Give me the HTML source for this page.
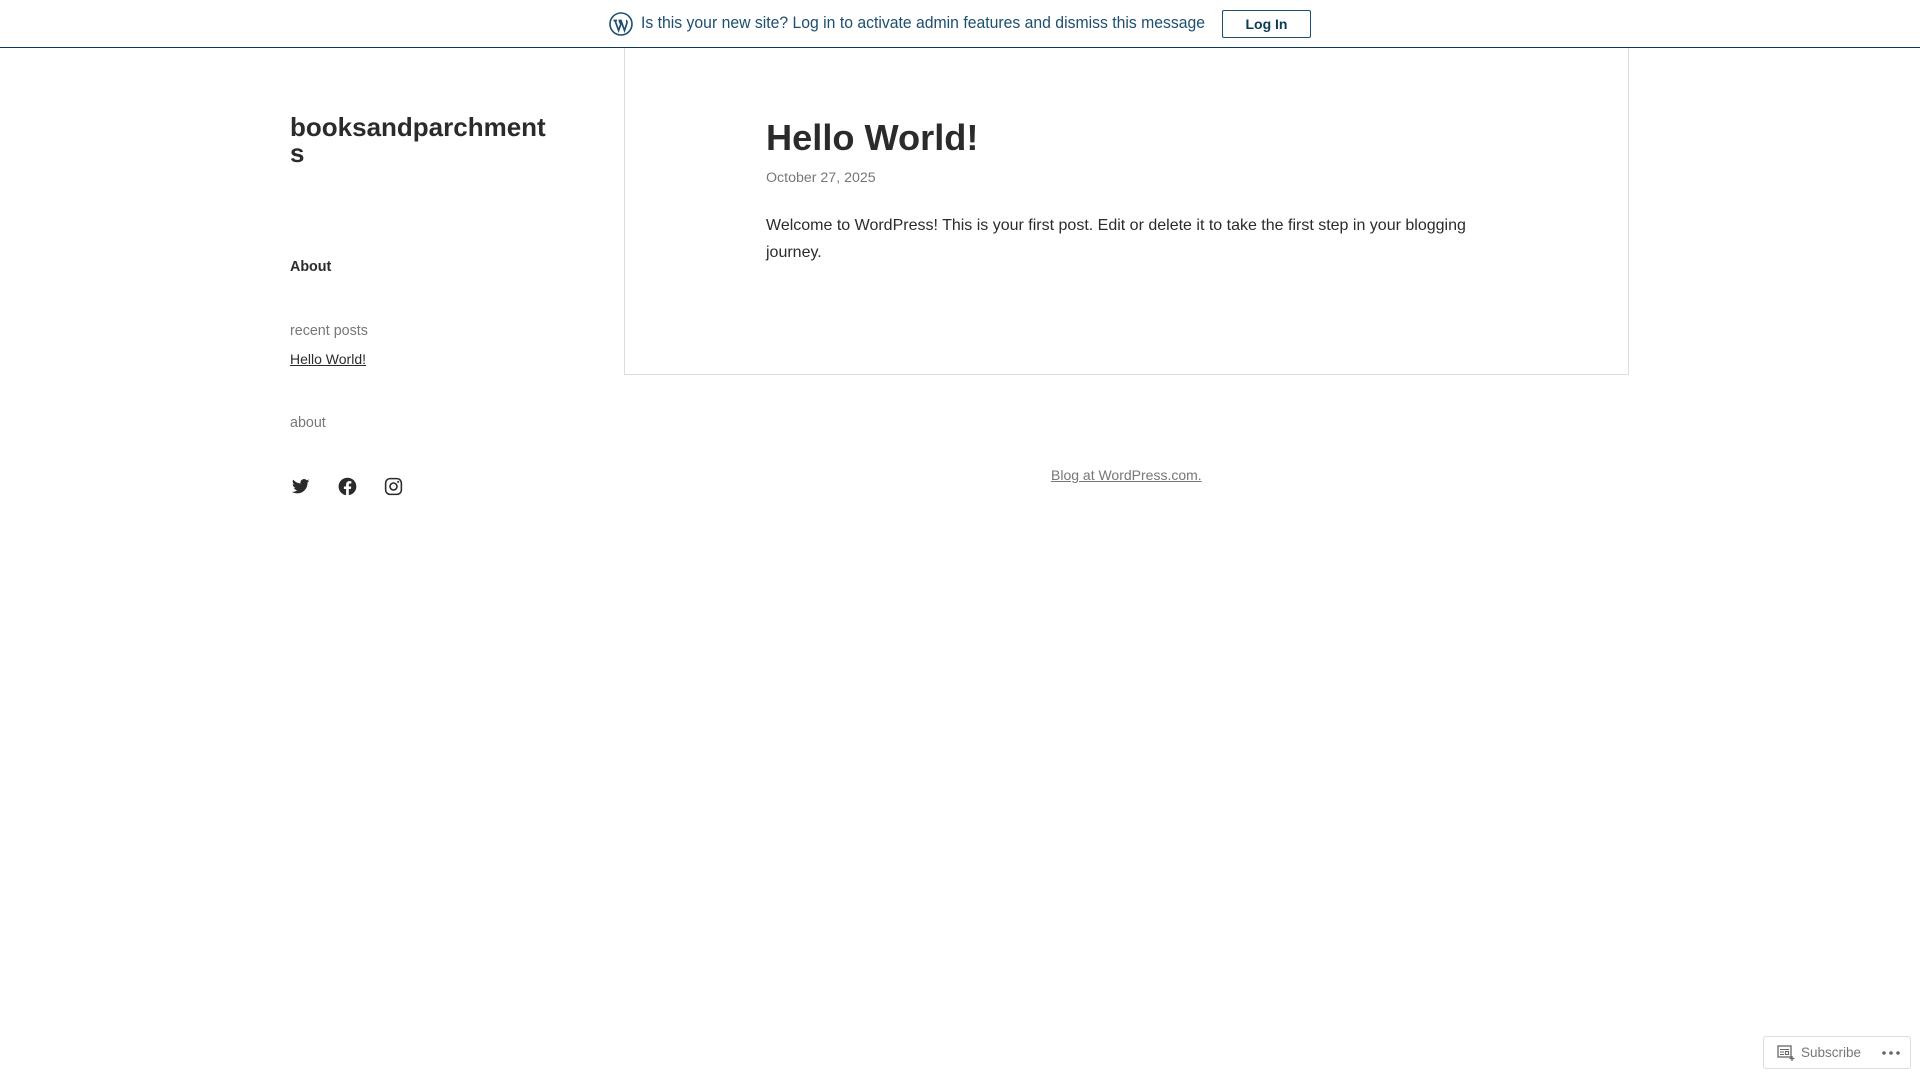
<!DOCTYPE html>
<html><head><meta charset="utf-8"><style>
*{margin:0;padding:0;box-sizing:border-box}
body{width:1920px;height:1080px;background:#fff;font-family:"Liberation Sans",sans-serif;color:#2b2b2b;position:relative;overflow:hidden}
.bar{position:absolute;left:0;top:0;width:1920px;height:48px;border-bottom:1px solid #0f3a55;}
.bar .msg{position:absolute;left:641px;top:14px;font-size:16.5px;color:#1d4f6e;transform:scaleX(0.955);transform-origin:left top;white-space:nowrap}
.bar .btn{position:absolute;left:1222px;top:10px;width:89px;height:28px;border:1px solid #1d4f6e;border-radius:2px;font-size:14px;font-weight:bold;color:#0f3a55;text-align:center;line-height:26px}
.abs{position:absolute;white-space:nowrap}
.card{position:absolute;left:624px;top:48px;width:1005px;height:327px;border:1px solid #ddd;border-top:none}
</style></head><body>
<div class="bar">
<svg style="position:absolute;left:609px;top:12px" width="24" height="24" viewBox="0 0 24 24"><circle cx="12" cy="12" r="11" fill="none" stroke="#1d4f6e" stroke-width="1.6"/><path d="M4.5 8.5h3.5M6 8.5l3.6 10 2.2-6.2-1.5-3.8M9.5 8.5h3.2M12 8.5l3.5 10 2.3-7c.6-2-.2-3-.8-3" fill="none" stroke="#1d4f6e" stroke-width="1.7"/></svg>
<div class="msg">Is this your new site? Log in to activate admin features and dismiss this message</div>
<div class="btn">Log In</div>
</div>
<div class="abs" style="left:290px;top:114px;font-size:26px;font-weight:bold;line-height:26px">booksandparchment<br>s</div>
<div class="abs" style="left:290px;top:259px;font-size:14.3px;font-weight:bold">About</div>
<div class="abs" style="left:290px;top:323px;font-size:14.3px;color:#777">recent posts</div>
<div class="abs" style="left:290px;top:351px;font-size:14px;text-decoration:underline">Hello World!</div>
<div class="abs" style="left:290px;top:415px;font-size:14.3px;color:#777">about</div>
<svg class="abs" style="left:290px;top:476px" width="21" height="21" viewBox="0 0 24 24"><path fill="#2b2b2b" d="M22.2 5.4c-.8.3-1.6.6-2.4.7.9-.5 1.5-1.4 1.8-2.3-.8.5-1.7.8-2.6 1A4.1 4.1 0 0 0 12 8.5 11.6 11.6 0 0 1 3.6 4.2a4.1 4.1 0 0 0 1.3 5.5c-.7 0-1.3-.2-1.9-.5 0 2 1.4 3.7 3.3 4.1-.6.2-1.2.2-1.8.1.5 1.6 2 2.8 3.8 2.9A8.2 8.2 0 0 1 2 18c1.8 1.2 4 1.8 6.3 1.8 7.5 0 11.7-6.3 11.7-11.7v-.5c.8-.6 1.5-1.3 2.2-2.2z"/></svg>
<svg class="abs" style="left:337px;top:476px" width="21" height="21" viewBox="0 0 24 24"><path fill="#2b2b2b" d="M12 2a10 10 0 0 0-1.6 19.9v-7H7.9V12h2.5V9.8c0-2.5 1.5-3.9 3.8-3.9 1.1 0 2.2.2 2.2.2v2.5h-1.3c-1.2 0-1.6.8-1.6 1.6V12h2.8l-.5 2.9h-2.3v7A10 10 0 0 0 12 2z"/></svg>
<svg class="abs" style="left:383px;top:476px" width="21" height="21" viewBox="0 0 24 24"><rect x="3" y="3" width="18" height="18" rx="5" fill="none" stroke="#2b2b2b" stroke-width="1.8"/><circle cx="12" cy="12" r="4" fill="none" stroke="#2b2b2b" stroke-width="1.8"/><circle cx="17.3" cy="6.7" r="1.2" fill="#2b2b2b"/></svg>
<div class="card"></div>
<div class="abs" style="left:766px;top:117px;font-size:36.2px;font-weight:bold">Hello World!</div>
<div class="abs" style="left:766px;top:170px;font-size:14.2px;color:#777">October 27, 2025</div>
<div class="abs" style="left:766px;top:212px;font-size:16px;line-height:27px;white-space:normal;width:740px">Welcome to WordPress! This is your first post. Edit or delete it to take the first step in your blogging journey.</div>
<div class="abs" style="left:1051px;top:467px;font-size:14px;color:#777;text-decoration:underline">Blog at WordPress.com.</div>
<div class="abs" style="left:1763px;top:1036px;width:148px;height:33px;border:1px solid #ddd;border-radius:3px;background:#fff">
<svg style="position:absolute;left:13px;top:8px" width="18" height="17" viewBox="0 0 18 17"><rect x="1" y="1" width="13" height="11" fill="none" stroke="#666" stroke-width="1.3"/><path d="M3 4.5h9M3 7h4M3 9.5h4M8.5 6.5h3v3h-3z" stroke="#666" stroke-width="1.1" fill="none"/><path d="M15 11v5M12.5 13.5h5" stroke="#666" stroke-width="1.3"/></svg>
<span style="position:absolute;left:37px;top:8px;font-size:13.5px;color:#777">Subscribe</span>
<svg style="position:absolute;left:117px;top:13px" width="20" height="6"><circle cx="3" cy="3" r="1.8" fill="#666"/><circle cx="10" cy="3" r="1.8" fill="#666"/><circle cx="17" cy="3" r="1.8" fill="#666"/></svg>
</div>
</body></html>
